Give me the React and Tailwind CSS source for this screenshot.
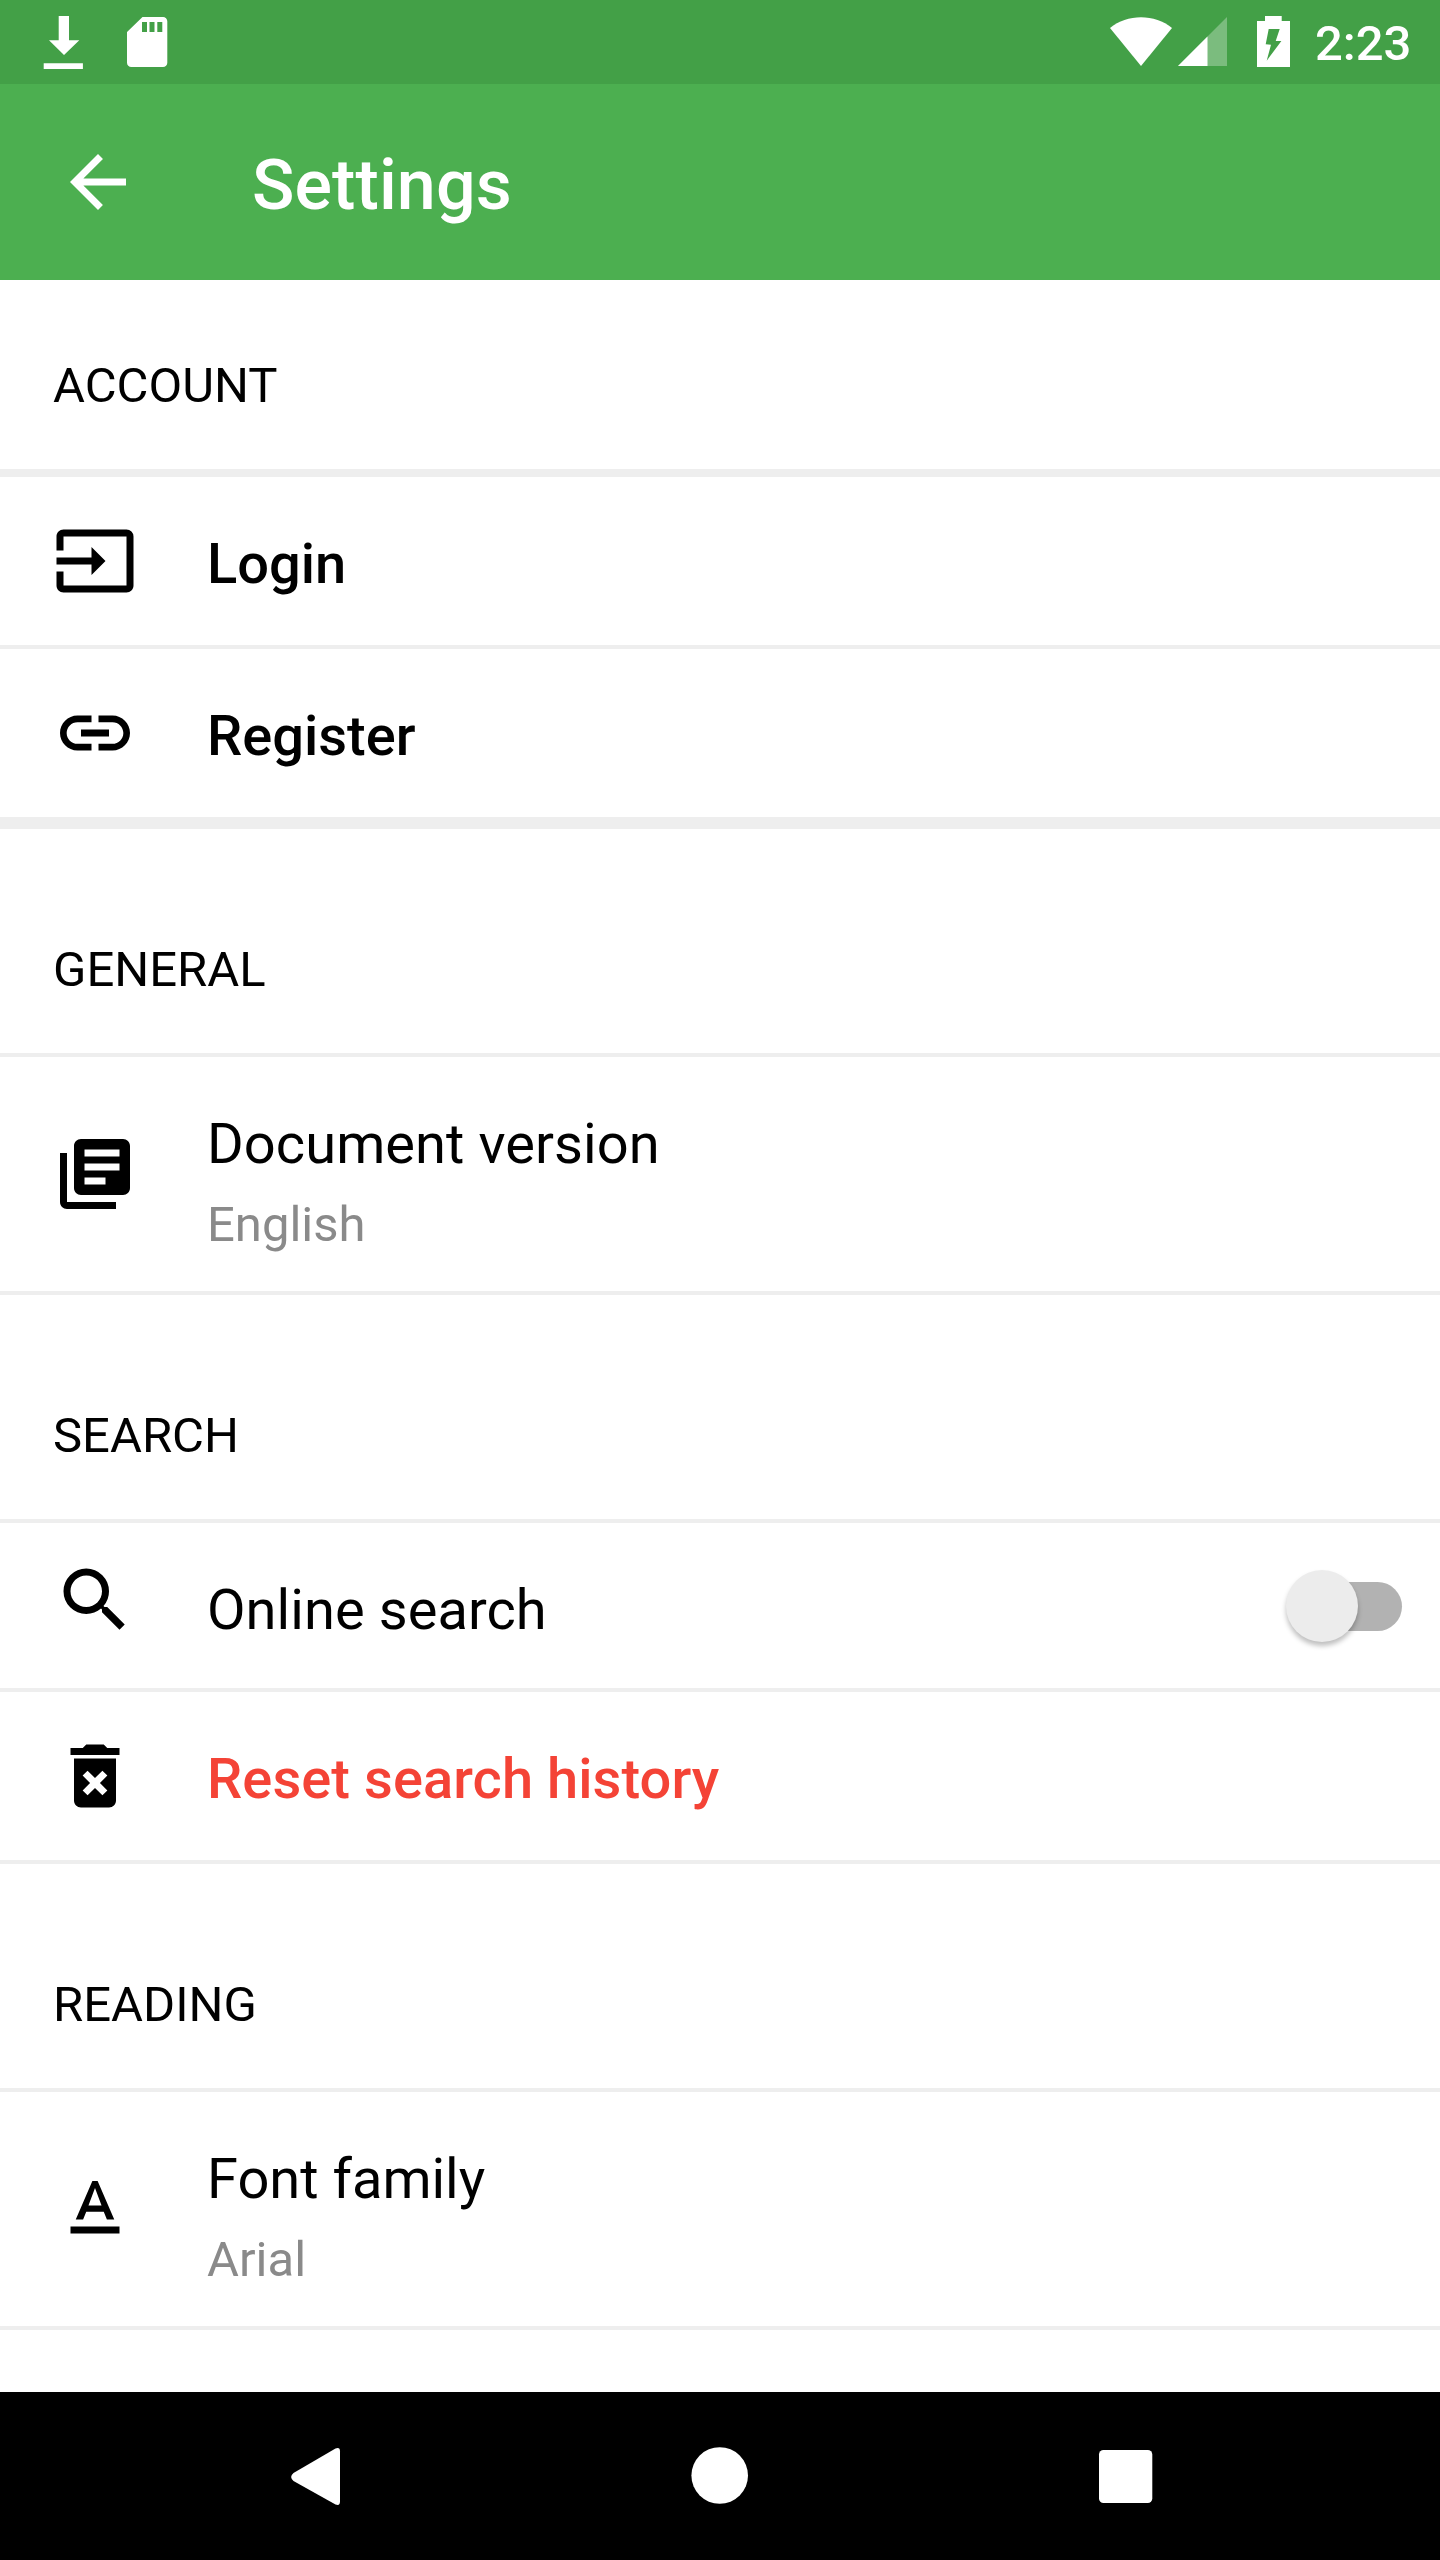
import { useState } from 'react';
import { MdArrowBack, MdDeleteForever, MdInput, MdLibraryBooks, MdLink, MdSearch, MdTextFormat } from 'react-icons/md';

const StatusBar = () => {
  return (
    <div className="flex justify-between h-[84px] bg-[#43a047] text-white">
      <svg width="180" height="84" viewBox="0 0 180 84" fill="currentColor">
        <path d="M58.7 16h10.3v24.3h10.3L64 55 49 40.3h9.7zM43.7 63.3h39.2V69H43.7z" />
        <path fillRule="evenodd" d="M142.5 17H163a4.3 4.3 0 0 1 4.3 4.3v41.4A4.3 4.3 0 0 1 163 67h-31.7a4.3 4.3 0 0 1-4.3-4.3V32zM142 22v10h5V22zM149.5 22v10h5V22zM157.3 22v10h5V22z" />
      </svg>
      <div className="flex">
        <svg width="210" height="84" viewBox="1100 0 210 84" fill="currentColor">
          <path d="M1110 28C1127 13.500 1155 13.500 1172 28L1141 66z" />
          <path d="M1227 17v49h-49z" opacity="0.3" />
          <path d="M1207.500 36.500V66H1178z" />
          <path fillRule="evenodd" d="M1265 16h16.700v5h8.300v46h-33V21h8zM1268.700 29l-3 15.300 5.300.4-4.300 16 14.700-19.700h-5.700l4-12z" />
        </svg>
        <span className="w-[130px] pl-[5px] pt-[12px] text-[49px] leading-[64px] font-medium">2:23</span>
      </div>
    </div>
  );
};

const AppBar = () => {
  return (
    <header className="flex items-center h-[196px] pl-[56px] bg-[#4caf50] text-white">
      <button type="button" aria-label="Back">
        <MdArrowBack className="size-[84px]" />
      </button>
      <h1 className="ml-[112px] pt-[6px] text-[70px] leading-[84px] font-medium tracking-[0.1px]">Settings</h1>
    </header>
  );
};

const SectionTitle = ({ children, className }) => {
  return (
    <h2 className={`flex items-end pl-[53px] pb-[54px] text-[49px] leading-[58px] border-[#eeeeee] ${className}`}>{children}</h2>
  );
};

const Row = ({ icon, title, subtitle, className, titleClass = '', iconClass = '', children }) => {
  return (
    <div className={`flex items-center pl-[53px] border-[#eeeeee] ${className}`}>
      <span className={iconClass}>{icon}</span>
      <div className="ml-[70px] flex-1">
        <div className={`text-[56px] ${titleClass}`}>{title}</div>
        {subtitle && <div className="text-[49px] leading-[82px] text-[#8a8a8a]">{subtitle}</div>}
      </div>
      {children}
    </div>
  );
};

const Toggle = () => {
  const [on, setOn] = useState(false);

  return (
    <button
      type="button"
      role="switch"
      aria-checked={on}
      aria-label="Online search"
      onClick={() => setOn(!on)}
      className="w-[103px] h-[49px] mr-[38px] mt-px"
    >
      <span className="relative flex items-center w-full h-[49px] rounded-full bg-[#b2b2b2]">
        <span className={`absolute size-[72px] rounded-full bg-[#ececec] shadow-[0_4px_5px_rgba(0,0,0,0.25)] ${on ? '-right-[13px]' : '-left-[13px]'}`} />
      </span>
    </button>
  );
};

const NavBar = () => {
  return (
    <nav className="flex items-center justify-center h-[168px] bg-black">
      <svg width="866" height="60" viewBox="287 2446 866 60" fill="white">
        <path d="M293.500 2473L335.500 2448.600Q340 2446.800 340 2451.500V2501.500Q340 2506.200 335.500 2504.400L293.500 2481Q288.800 2477 293.500 2473z" />
        <circle cx="719.700" cy="2475.500" r="28.300" />
        <rect x="1099" y="2450" width="53.300" height="53" rx="4.500" />
      </svg>
    </nav>
  );
};

const iconSize = 'size-[84px]';

const App = () => {
  return (
    <div className="flex flex-col w-[1440px] h-[2560px] overflow-hidden bg-white text-black font-['Roboto',sans-serif]">
      <StatusBar />
      <AppBar />
      <main className="flex-1">
        <SectionTitle className="h-[197px] border-b-8">ACCOUNT</SectionTitle>
        <Row className="h-[172px] border-b-4" titleClass="font-medium pt-[6px]" icon={<MdInput className={iconSize} />} title="Login" />
        <Row className="h-[180px] border-b-12" titleClass="font-medium pt-[6px]" icon={<MdLink className={iconSize} />} title="Register" />

        <SectionTitle className="h-[228px] border-b-4">GENERAL</SectionTitle>
        <Row className="h-[238px] border-b-4" titleClass="leading-[80px] pt-[22px] tracking-[0.07px]" icon={<MdLibraryBooks className={iconSize} />} title="Document version" subtitle="English" />

        <SectionTitle className="h-[228px] border-b-4">SEARCH</SectionTitle>
        <Row className="h-[169px] border-b-4" titleClass="pt-[9px] tracking-[0.07px]" iconClass="pb-[12px]" icon={<MdSearch className={iconSize} />} title="Online search">
          <Toggle />
        </Row>
        <Row className="h-[172px] border-b-4" titleClass="font-medium text-[#f44336] pt-[6px] tracking-[0.07px]" icon={<MdDeleteForever className={iconSize} />} title="Reset search history" />

        <SectionTitle className="h-[228px] border-b-4">READING</SectionTitle>
        <Row className="h-[238px] border-b-4" titleClass="leading-[80px] pt-[22px]" icon={<MdTextFormat className={iconSize} />} title="Font family" subtitle="Arial" />
      </main>
      <NavBar />
    </div>
  );
};

export default App;
